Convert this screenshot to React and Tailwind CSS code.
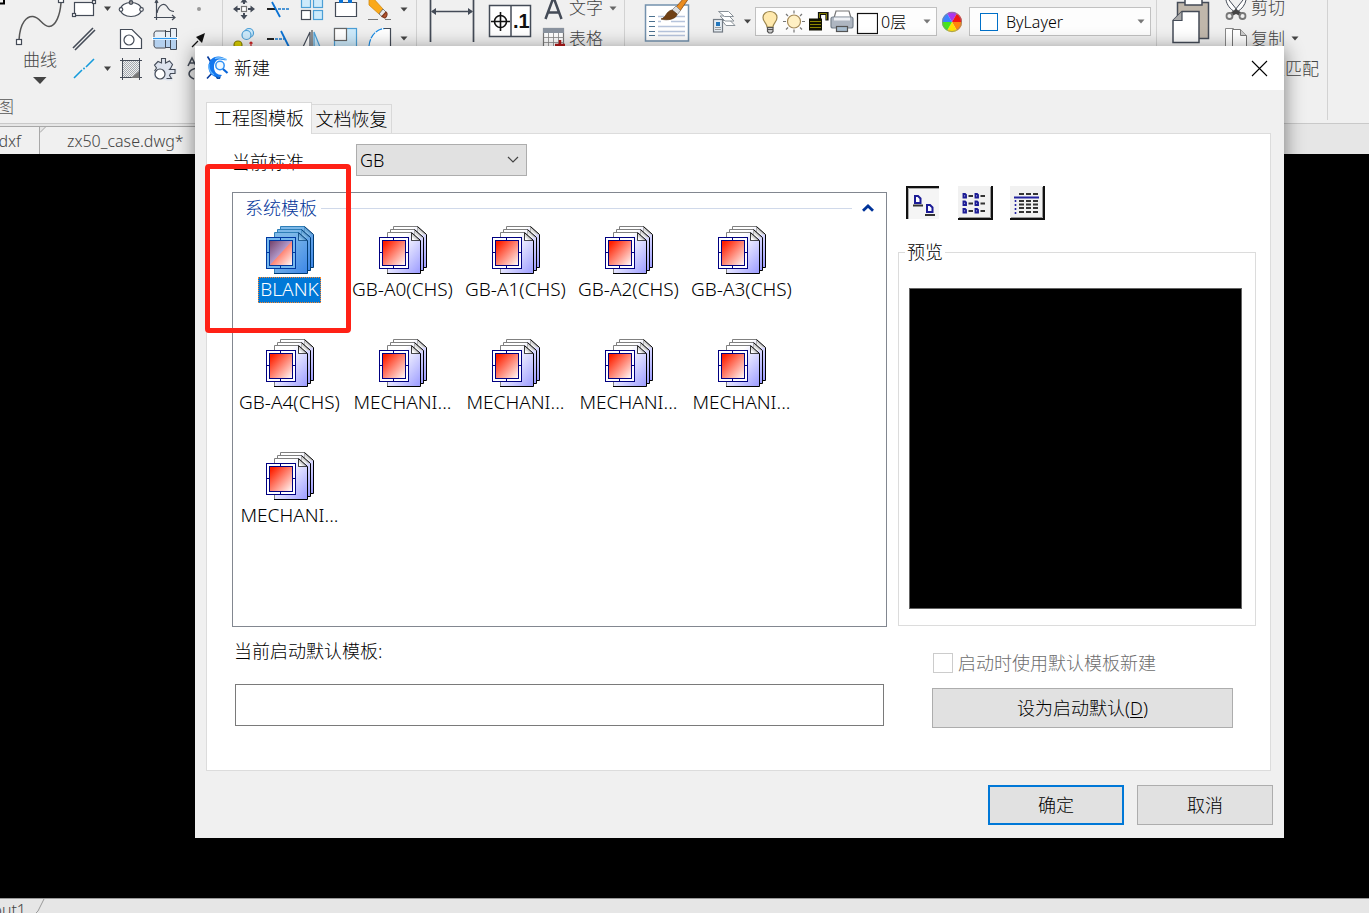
import React from "react";

const UI = "font-light font-['Noto_Sans','Noto_Sans_CJK_SC',sans-serif]";

/* Drawing tile whose coordinates are window coordinates. */
function Tile({ x, y, w, h, children }) {
  return (
    <svg width={w} height={h} viewBox={`${x} ${y} ${w} ${h}`} className="block shrink-0" fill="none" stroke="#444b57" strokeWidth="1.2">
      {children}
    </svg>
  );
}

function Caret({ className = "text-[#444]" }) {
  return (
    <svg width="8" height="5" viewBox="0 0 8 5" className={`block shrink-0 ${className}`}>
      <path d="M0.5 0.5h7L4 4.5z" fill="currentColor" />
    </svg>
  );
}

function DrawGroup() {
  return (
    <div className="flex h-full w-[223px] shrink-0 flex-col border-r border-[#d2d2d2]">
      <div className="flex h-[84px]">
        <div className="flex w-[70px] flex-col">
          <Tile x={0} y={0} w={70} h={48}>
            <path d="M0 3.500H4V0" stroke="#000" strokeWidth="2" />
            <path d="M19 40C20 22 27 16 33 16.500C40 17 42 26 49 26.500C56 26 60 15 61 3" strokeWidth="1.500" stroke="#555" />
            <rect x="16.500" y="39.500" width="5" height="5" fill="#fff" />
            <rect x="58.500" y="-2.500" width="5" height="5" fill="#fff" />
          </Tile>
          <div className="flex h-[36px] flex-col items-center pl-[10px]">
            <span className="h-[28px] text-[17px] leading-[24px] text-[#444]">曲线</span>
            <svg width="14" height="8" viewBox="0 0 14 8" className="block"><path d="M0 1h13.500L7 8z" fill="#444" /></svg>
          </div>
        </div>
        <div className="flex flex-col">
          <div className="flex">
            <Tile x={70} y={0} w={44} h={24}>
              <rect x="74.500" y="2.500" width="19" height="13" fill="#fff" />
              <rect x="72.500" y="13.500" width="3" height="3" fill="#fff" />
              <rect x="92.500" y="0.500" width="3" height="3" fill="#fff" />
              <path d="M104 6.500h7l-3.500 4.500z" fill="#444" stroke="none" />
            </Tile>
            <Tile x={114} y={0} w={34} h={24}>
              <ellipse cx="131" cy="9.500" rx="10.500" ry="7" fill="#fff" />
              <circle cx="131" cy="2.500" r="1.800" fill="#999" />
              <circle cx="121" cy="9.500" r="1.800" fill="#fff" />
              <circle cx="141.500" cy="9.500" r="1.800" fill="#fff" />
            </Tile>
            <Tile x={148} y={0} w={34} h={24}>
              <path d="M156.500 0v20M154 17.500h20M172 15l3 2.500l-3 2.500M155 3l1.500-3l1.500 3" />
              <path d="M157 13C159 3 165 3 167 6.500C169 10 170 11 174 11.500" />
            </Tile>
            <Tile x={182} y={0} w={34} h={24}><circle cx="199" cy="9" r="2" fill="#999" stroke="none" /></Tile>
          </div>
          <div className="flex">
            <Tile x={70} y={24} w={44} h={30}><path d="M73 48L93 28M75 50L95 30" strokeWidth="1.600" /></Tile>
            <Tile x={114} y={24} w={34} h={30}>
              <path d="M120.500 29.500H132L141.500 39V48.500H120.500z" fill="#fff" />
              <circle cx="129" cy="40" r="5" />
            </Tile>
            <Tile x={148} y={24} w={34} h={30}>
              <path d="M155.500 31h10v17h-10l-1.500-2v-13zM165.500 31.500h5v16h-5zM170.500 28.500h6v21h-6z" fill="#e9eff6" stroke="none" />
              <path d="M154 39h22.500v10.500h-6v-2h-15l-1.500-2z" fill="#b4d0ee" stroke="none" />
              <path d="M165.500 31h-10l-1.500 2v13l1.500 2h10M165.500 30v18M165.500 31.500h5M165.500 47.500h5M170.500 28.500h6v21h-6z" strokeWidth="1" />
              <path d="M152 38.500h26" stroke="#fff" strokeWidth="3" /><path d="M153 38.500h24" stroke="#2f98ee" strokeWidth="1.300" />
            </Tile>
            <Tile x={182} y={24} w={34} h={30}><path d="M192 47l6-6" stroke="#111" /><path d="M205 33l-9 4l6 6z" fill="#111" stroke="none" /></Tile>
          </div>
          <div className="flex">
            <Tile x={70} y={54} w={44} h={30}>
              <path d="M74 78l8-8M86 67l8-8" stroke="#149bdc" strokeWidth="1.600" />
              <circle cx="84" cy="68.500" r="1" fill="#149bdc" stroke="none" />
              <path d="M104 66.500h7l-3.500 4.500z" fill="#444" stroke="none" />
            </Tile>
            <Tile x={114} y={54} w={34} h={30}>
              <defs><pattern id="hatch" width="2" height="2" patternUnits="userSpaceOnUse"><path d="M0 0h1v1H0zM1 1h1v1H1z" fill="#a3a9b0" stroke="none" /></pattern></defs>
              <path d="M123 61h16v11l-7 5h-9z" fill="url(#hatch)" stroke="none" />
              <path d="M122.500 58v22M139.500 58v22M120 60.500h22M120 77.500h22" strokeWidth="1" />
              <path d="M139 71l-8 7h8z" fill="#777" stroke="none" />
            </Tile>
            <Tile x={148} y={54} w={34} h={30}>
              <path d="M154 78v-6l3-4l-3-3l3.500-4l4 1.500v-4h4v4l4-2.500l4 4l-2 4.500h5v5h-4v7h-5z" fill="#dde3ee" stroke="none" />
              <path d="M154.500 71l2-3l-2-3l3.500-3.500l3.500 1.500v-4.500h4v4.500l4-2l3 3.500l-2 4l-1 1h5.500v4h-4.500l-1 2l2 3h-5" strokeWidth="1.100" />
              <circle cx="160" cy="74" r="5" fill="#fff" />
            </Tile>
            <Tile x={182} y={54} w={34} h={30}><path d="M188 66l4-8l4 8M190 63h5M197 68c-10 2-10 8-3 11" strokeWidth="1.600" /></Tile>
          </div>
        </div>
      </div>
      <div className="flex h-[39px] pt-[12px]"><span className="-ml-[3px] text-[17px] leading-[22px] text-[#555]">图</span></div>
    </div>
  );
}

function ModifyGroup() {
  return (
    <div className="flex h-full w-[194px] shrink-0 flex-col border-r border-[#d2d2d2]">
      <div className="flex">
        <Tile x={223} y={0} w={39} h={24}>
          <rect x="241.500" y="6.500" width="5" height="5" fill="#fff" stroke="#777" />
          <path d="M235 9h5M248 9h5M244 0v4M244 13v4" strokeWidth="2" />
          <path d="M233 9l4.500-3.500v7zM255 9l-4.500-3.500v7zM244 19.500l-3.500-4.500h7zM244 -2l-3.500 4.500h7z" fill="#444b57" stroke="none" />
        </Tile>
        <Tile x={262} y={0} w={33} h={24}><path d="M267 9h9" strokeWidth="2" stroke="#222" /><path d="M278 9h12" strokeWidth="1.500" strokeDasharray="3 1" stroke="#1477cc" /><path d="M272 2l8 15" stroke="#0a72d4" strokeWidth="1.800" /></Tile>
        <Tile x={295} y={0} w={33} h={24}>
          <g fill="#cdeafb" stroke="#4c9fd6"><rect x="301.500" y="-2" width="9" height="9.500" /><rect x="313.500" y="-2" width="9" height="9.500" /><rect x="313.500" y="10.500" width="9" height="9" /></g>
          <rect x="301.500" y="10.500" width="9" height="9" fill="#fff" />
        </Tile>
        <Tile x={328} y={0} w={35} h={24}><path d="M335.500 2.500h21v14h-21z" fill="#fff" /><path d="M339 0h4v3h-4zM348 0h4v3h-4z" fill="#0a72d4" stroke="none" /></Tile>
        <Tile x={363} y={0} w={32} h={24}>
          <path d="M369 0l4-2l10 11l-4 5l-10-9z" fill="#fba919" stroke="#d18a11" strokeWidth="0.800" />
          <path d="M379 14l4-5l3 3l-4 4.500z" fill="#e8e8e8" stroke="#666" strokeWidth="0.800" />
          <path d="M382 16.500l4-4.500c2 1 1 5-1 6z" fill="#b5542f" stroke="#803a20" />
          <path d="M368 19.500h10M385 19.500h6" stroke="#777" />
        </Tile>
        <div className="flex h-[18px] items-center pl-[5px]"><Caret /></div>
      </div>
      <div className="flex">
        <Tile x={223} y={24} w={39} h={30}><circle cx="249" cy="33" r="4.500" fill="#cdeafb" stroke="#4c9fd6" /><circle cx="246.500" cy="35" r="4.500" fill="#cdeafb" stroke="#4c9fd6" /><circle cx="238" cy="45" r="4" fill="#dcd000" stroke="#888000" /><path d="M251 42v6M249.500 43.500l1.500-1.500l1.500 1.500" stroke="#c22" /></Tile>
        <Tile x={262} y={24} w={33} h={30}><path d="M267 39h7" strokeWidth="2" stroke="#222" /><path d="M275 39h9" strokeWidth="1.500" strokeDasharray="3 1" stroke="#1477cc" /><path d="M281 31l8 16" stroke="#0a72d4" strokeWidth="1.800" /></Tile>
        <Tile x={295} y={24} w={33} h={30}><path d="M303 47l7-15v15" fill="#fff" /><path d="M320 47l-6-15v15" fill="#cdeafb" stroke="#4c9fd6" /><path d="M312 30v20" strokeWidth="1.600" stroke="#777" /></Tile>
        <Tile x={328} y={24} w={35} h={30}><rect x="334.500" y="28.500" width="22" height="22" fill="#cdeafb" stroke="#4c9fd6" /><rect x="334.500" y="28.500" width="12" height="12" fill="#fff" stroke="#666" /></Tile>
        <Tile x={363} y={24} w={32} h={30}><path d="M369 50C369 36 376 28.500 385 28.500H390.500V50" fill="#fff" stroke="none" /><path d="M369 46C370 36 376 29 385 28.500" stroke="#198be5" strokeDasharray="7 1" /><path d="M384 28.500h6.500V50" /></Tile>
        <div className="flex h-[28px] items-center pl-[5px]"><Caret /></div>
      </div>
    </div>
  );
}

function AnnotateGroup() {
  return (
    <div className="flex h-full w-[208px] shrink-0 border-r border-[#d2d2d2]">
      <Tile x={417} y={0} w={63} h={50}>
        <path d="M430.500 0v42M473.500 0v42" strokeWidth="1.700" />
        <path d="M432 11.500h40" strokeWidth="1.300" />
        <path d="M431 11.500l5-3.500v7zM473 11.500l-5-3.500v7z" fill="#444b57" stroke="none" />
      </Tile>
      <Tile x={480} y={0} w={56} h={50}>
        <rect x="489.500" y="5.500" width="41" height="31" fill="#fff" strokeWidth="1.500" />
        <path d="M511 5v32" strokeWidth="1.500" />
        <circle cx="500.500" cy="21.500" r="6" stroke="#111" strokeWidth="1.600" /><path d="M491 21.500h19M500.500 12v19" stroke="#111" strokeWidth="1.600" />
        <text x="513" y="28" fontSize="20" fontWeight="700" fill="#111" stroke="none" fontFamily="Liberation Sans">.1</text>
      </Tile>
      <div className="flex flex-col text-[17px] text-[#444]">
        <div className="flex h-[24px]">
          <Tile x={536} y={0} w={33} h={24}><path d="M545.500 19L552.500 0H554.500L561.500 19M548 12.500h11" strokeWidth="2.500" /></Tile>
          <span className="-mt-[4px] leading-[24px]">文字</span>
          <div className="flex h-[17px] items-center pl-[6px]"><Caret className="text-[#666]" /></div>
        </div>
        <div className="flex h-[30px]">
          <Tile x={536} y={24} w={33} h={30}>
            <rect x="543.500" y="28.500" width="20" height="22" fill="#fff" stroke="#777" /><rect x="543" y="28" width="21" height="5" fill="#8a939f" stroke="none" />
            <path d="M544 37.500h20M544 42.500h20M548.500 33v17M553.500 33v17M558.500 33v17" strokeWidth="0.800" stroke="#888" />
            <path d="M560 40v10M555 45h10" stroke="#b01818" strokeWidth="2.500" />
          </Tile>
          <span className="mt-[3px] leading-[24px]">表格</span>
        </div>
      </div>
    </div>
  );
}

function Combo({ children }) {
  return (
    <div className="mt-[7px] flex h-[29px] w-[182px] shrink-0 items-center border border-[#c1c1c1] bg-[#fdfdfd] text-[16px] text-black">
      {children}
      <div className="ml-auto pr-[5px]"><Caret className="text-[#777]" /></div>
    </div>
  );
}

function LayerGroup() {
  return (
    <div className="flex h-full w-[532px] shrink-0 border-r border-[#d2d2d2]">
      <Tile x={625} y={0} w={80} h={50}>
        <rect x="645.500" y="5" width="43" height="36" fill="#fff" stroke="#7391ad" strokeWidth="1.500" />
        <path d="M649 16.500h6M649 21.500h6M649 26.500h6M649 31.500h6M649 35.500h6" stroke="#4b7190" />
        <path d="M658 16.500h6M674 16.500h11M658 21.500h3M671 21.500h14M658 26.500h27M658 31.500h27M658 35.500h27" stroke="#b6c4dc" strokeWidth="1.500" />
        <path d="M676 7l8-9h5l-9 13z" fill="#e98c20" stroke="#854811" strokeWidth="0.800" />
        <path d="M672 10l4-4l4.500 4.500l-3 4z" fill="#ddd" stroke="#777" strokeWidth="0.700" />
        <path d="M661 19c5-1 5-8 11-9l5 4c0 5-10 7-16 5z" fill="#704014" stroke="#54300f" strokeWidth="0.700" />
      </Tile>
      <Tile x={705} y={0} w={50} h={50}>
        <g fill="#fff" stroke="#8a9299" strokeWidth="1"><path d="M722 20.500h8l5 5h-9z" /><path d="M720 16h9l5 5h-9z" /><path d="M718.500 11.500h10l5 5h-9z" /></g>
        <rect x="713.500" y="19.500" width="9" height="12.500" fill="#e6edf3" stroke="#737b84" />
        <rect x="716" y="22" width="4" height="4" fill="#2377bd" stroke="none" /><path d="M715 27.500h6M715 29.500h6" strokeWidth="0.800" stroke="#888" />
        <path d="M744 19.500h7l-3.500 4z" fill="#444" stroke="none" />
      </Tile>
      <Combo>
        <Tile x={756} y={8} w={122} h={27}>
          <path d="M767 27c0-4-4-5-4-9.500c0-8 14-8 14 0c0 4.500-4 5.500-4 9.500z" fill="#ffe9ad" stroke="#9c8750" />
          <path d="M767.500 27.500h5.500v4l-1.500 1.500h-2.500l-1.500-1.500zM767.500 29.500h5.500" fill="#ccc" stroke="#555" />
          <circle cx="794" cy="21.500" r="6.500" fill="#fff0c4" stroke="#a58a58" />
          <path d="M794 10.500v3M794 29.500v3M783 21.500h3M802 21.500h3M786 14l2 2M800 27.500l2 2M786 29.500l2-2M800 16l2-2" stroke="#777" />
          <path d="M819.500 20v-6.500h7.500v7" stroke="#111" strokeWidth="3.200" /><path d="M819.500 18v-4.500h7v6" stroke="#8c8700" strokeWidth="0.900" />
          <rect x="809" y="18.500" width="13" height="12" fill="#111100" stroke="none" /><path d="M810 21.500h11M810 24.500h11M810 27.500h11" stroke="#8c8700" strokeWidth="1" />
          <path d="M834 18l2-7h13l2 7" fill="#fff" stroke="#777" />
          <rect x="831" y="17" width="22" height="11" rx="2" fill="#aeb6c1" stroke="#77828e" /><path d="M834 19h16" stroke="#eef1f5" strokeWidth="3" /><rect x="836.500" y="26.500" width="11" height="5" fill="#a9bed0" stroke="#555" />
          <rect x="857.500" y="13.500" width="20" height="20" fill="#fff" stroke="#111" />
        </Tile>
        <span className="pl-[3px] leading-[24px]">0层</span>
      </Combo>
      <Tile x={937} y={0} w={32} h={45}>
        <g stroke="none">
          <path d="M952 22L947 13.300A10 10 0 0 1 957 13.300z" fill="#ad35ef" /><path d="M952 22L957 13.300A10 10 0 0 1 962 22z" fill="#f31616" />
          <path d="M952 22H962A10 10 0 0 1 957 30.700z" fill="#ff850b" /><path d="M952 22L957 30.700A10 10 0 0 1 947 30.700z" fill="#ffe100" />
          <path d="M952 22L947 30.700A10 10 0 0 1 942 22z" fill="#48e31d" /><path d="M952 22H942A10 10 0 0 1 947 13.300z" fill="#3a83ff" />
        </g>
        <circle cx="952" cy="22" r="9.500" stroke="#888" strokeWidth="0.800" />
      </Tile>
      <Combo>
        <span className="ml-[10px] mr-[8px] block h-[18px] w-[18px] border border-[#0070c8] bg-white" />
        <span className="leading-[24px]">ByLayer</span>
      </Combo>
    </div>
  );
}

function ClipGroup() {
  return (
    <div className="flex h-[120px] w-[171px] shrink-0 border-r border-[#d2d2d2] text-[17px] text-[#444]">
      <Tile x={1157} y={0} w={66} h={50}>
        <rect x="1177.500" y="2.500" width="31" height="36" fill="#c0b7ab" strokeWidth="1.500" />
        <path d="M1185 -1h17v6h-17z" fill="#fff" strokeWidth="1.500" />
        <path d="M1182 11.500h17v31h-26v-22z" fill="#fff" strokeWidth="1.500" /><path d="M1182 11.500v9h-9" fill="#aaa" />
      </Tile>
      <div className="flex flex-col">
        <div className="flex h-[24px]">
          <Tile x={1223} y={0} w={28} h={24}>
            <path d="M1226 0c1 5 4 9 9 12l2-2l-8-10M1246 0c-1 5-4 9-9 12l-2-2l8-10" fill="#fff" strokeWidth="1" />
            <path d="M1230 13l6-4l6 4l-2 3l-4-2l-4 2z" fill="#444" stroke="none" />
            <circle cx="1229.500" cy="16" r="3" strokeWidth="1.800" stroke="#777" /><circle cx="1242.500" cy="16" r="3" strokeWidth="1.800" stroke="#777" />
          </Tile>
          <span className="-mt-[4px] leading-[24px]">剪切</span>
        </div>
        <div className="flex h-[30px]">
          <Tile x={1223} y={24} w={28} h={30}>
            <path d="M1225.500 28.500h8l4 4V50h-12z" fill="#fff" stroke="#888" strokeWidth="1" /><path d="M1232.500 29.500h8l6 6V50h-14z" fill="#fff" stroke="#777" strokeWidth="1" /><path d="M1240.500 29.500v6h6" fill="#ccc" stroke="#777" strokeWidth="1" />
          </Tile>
          <span className="mt-[3px] leading-[24px]">复制</span>
          <div className="flex h-[29px] items-center pl-[6px]"><Caret /></div>
        </div>
        <div className="flex h-[30px] pl-[28px]"><span className="mt-[3px] leading-[24px]">特性匹配</span></div>
      </div>
    </div>
  );
}

function DocTabs() {
  return (
    <div className="flex h-[31px] shrink-0 items-end border-t border-[#c9c9c9] bg-[#e6e6e6] text-[16px] text-[#444]">
      <div className="flex h-[28px] w-[40px] items-center justify-end border-r border-t border-[#a8a8a8] bg-[#f0f0f0] pr-[18px]">dxf</div>
      <div className="flex h-[28px] w-[170px] items-center border-t border-[#a8a8a8] bg-[#f0f0f0]">
        <svg width="6" height="28" viewBox="0 0 6 28" className="block"><path d="M0 0H6L0 6z" fill="#e6e6e6" /><path d="M0 5.500L5.500 0" stroke="#a8a8a8" fill="none" /></svg>
        <span className="pl-[21px]">zx50_case.dwg*</span>
      </div>
    </div>
  );
}

function TemplateIcon({ selected }) {
  const id = selected ? "sel" : "std";
  const edge = selected ? "#003b73" : "#000";
  const back = selected ? "#2f7fb8" : "#808080";
  const paper = `url(#paper-${id})`;
  const navy = selected ? "#0038a0" : "#000080";
  return (
    <svg width="50" height="48" viewBox="0 0 50 48" className="block" fill="none">
      <defs>
        <linearGradient id={`paper-${id}`} x1="0" y1="0" x2="1" y2="1">
          <stop offset="0.3" stopColor={selected ? "#7db8e8" : "#ffffff"} /><stop offset="1" stopColor={selected ? "#3c86e8" : "#9a9aff"} />
        </linearGradient>
        <linearGradient id={`red-${id}`} x1="0" y1="0" x2="1" y2="1">
          <stop offset="0.1" stopColor="#ff2000" /><stop offset="1" stopColor="#ffffff" />
        </linearGradient>
        <linearGradient id={`fold-${id}`} x1="0" y1="1" x2="1" y2="0">
          <stop offset="0.2" stopColor={selected ? "#8cc4ee" : "#ffffff"} /><stop offset="0.6" stopColor={selected ? "#3a7db8" : "#9a9a9a"} />
        </linearGradient>
        <linearGradient id="shade" x1="0" y1="0" x2="1" y2="1"><stop offset="0" stopColor="#74436b" /><stop offset="0.55" stopColor="#b9a3d4" /></linearGradient>
      </defs>
      {[[6, -6], [3, -3], [0, 0]].map(([dx, dy]) => (
        <g key={dx} transform={`translate(${dx} ${dy})`}>
          <path d="M9.500 6.500H33.500L42.500 14.500V47.500H9.500z" fill={paper} />
          <path d="M9.500 47V6.500H33.500V14.500" stroke={back} />
          <path d="M33.500 6.500V14.500H42.500z" fill={`url(#fold-${id})`} />
          <path d="M33.500 6.500L42.500 14.500V47.500H9" stroke={edge} />
          {dx === 0 && <path d="M33.500 7V14.500H42" stroke={edge} strokeWidth="0.700" />}
        </g>
      ))}
      <rect x="1.500" y="11.500" width="29" height="31" fill={selected ? "#75b8ee" : "#fff"} stroke={navy} />
      <path d="M15.500 11v4M15.500 39v4M1 26.500h4M27 26.500h4" stroke={navy} />
      <rect x="4.500" y="14.500" width="23" height="25" fill={`url(#red-${id})`} stroke={navy} />
      {selected && <path d="M5 15H27L5 39z" fill="url(#shade)" />}
    </svg>
  );
}

const templates = ["BLANK", "GB-A0(CHS)", "GB-A1(CHS)", "GB-A2(CHS)", "GB-A3(CHS)", "GB-A4(CHS)", "MECHANI...", "MECHANI...", "MECHANI...", "MECHANI...", "MECHANI..."];

function TemplateList() {
  return (
    <div className="h-[435px] w-[655px] border border-[#828790] bg-white">
      <div className="flex h-[33px] items-start pl-[12px] pr-[12px]">
        <span className="pt-[3px] text-[18px] leading-[24px] text-[#003399]">系统模板</span>
        <div className="ml-[4px] mt-[15px] h-px flex-1 bg-[#d0d9ea]" />
        <svg width="12" height="8" viewBox="0 0 12 8" className="ml-[10px] mt-[11px] block"><path d="M1 6.800L6 2L11 6.800" fill="none" stroke="#003399" strokeWidth="2.800" /></svg>
      </div>
      <div className="grid w-[565px] grid-cols-5 auto-rows-[113px]">
        {templates.map((name, i) => (
          <div key={i} className="flex flex-col items-center">
            <TemplateIcon selected={i === 0} />
            <span className={i === 0
              ? "mt-[3px] h-[26px] w-[63px] whitespace-nowrap bg-[#0078d7] text-center text-[19px] leading-[24px] text-white outline-dotted outline-1 -outline-offset-1 outline-[#ff8728]"
              : "mt-[3px] h-[26px] whitespace-nowrap text-[19px] leading-[24px] text-black"}>{name}</span>
          </div>
        ))}
      </div>
    </div>
  );
}

function ViewButtons() {
  const page = (x, y, k) => <path key={k} d={`M${x} ${y}h3l2.500 2.500v4.500h-5.500z`} fill="#fff" stroke="#1c1c96" strokeWidth="2" />;
  return (
    <div className="flex gap-[17px] pl-[8px]">
      <svg width="35" height="34" viewBox="0 0 35 34" className="block">
        <rect width="33" height="33" fill="#f5f5f5" /><path d="M1 33V1H33" stroke="#111" strokeWidth="2" fill="none" /><path d="M2.500 33V2.500H33" stroke="#aaa" fill="none" />
        {page(9, 10, "a")}{page(21, 19, "b")}<path d="M7 19.500h10M19 29h10" stroke="#333" strokeWidth="2" />
      </svg>
      <svg width="35" height="34" viewBox="0 0 35 34" className="block">
        <rect width="34" height="33" fill="#f1f1f1" /><path d="M32.500 1V31.500H1" stroke="#999" fill="none" /><path d="M34 0V33H0" stroke="#111" strokeWidth="2" fill="none" />
        {[8, 15.500, 23].map((y) => <g key={y} fill="none"><path d={`M5.500 ${y}h1.500l1 1v2.500h-2.500zM17.500 ${y}h1.500l1 1v2.500h-2.500z`} stroke="#1c1c96" strokeWidth="1.900" /><path d={`M10.500 ${y + 2}h4.500M22.500 ${y + 2}h4.500`} stroke="#333" strokeWidth="2" /></g>)}
      </svg>
      <svg width="35" height="34" viewBox="0 0 35 34" className="block">
        <rect width="34" height="33" fill="#f1f1f1" /><path d="M32.500 1V31.500H1" stroke="#999" fill="none" /><path d="M34 0V33H0" stroke="#111" strokeWidth="2" fill="none" />
        <path d="M9 8h5M16 8h5M23 8h5M9 15h5M16 15h5M23 15h5M9 18.500h5M16 18.500h5M23 18.500h5M9 22h5M16 22h5M23 22h5M9 26h5M16 26h5M23 26h5" stroke="#333" strokeWidth="2.200" />
        <path d="M4 11.500h25" stroke="#2323a0" strokeWidth="2" /><path d="M5.500 14v14" stroke="#2323a0" strokeWidth="1.600" strokeDasharray="2 2" />
      </svg>
    </div>
  );
}

function Dialog() {
  return (
    <div className="absolute left-[195px] top-[46px] flex h-[792px] w-[1089px] flex-col bg-[#f0f0f0] text-[18px] text-black shadow-[0_4px_18px_1px_rgba(0,0,0,0.45)]">
      <div className="flex h-[44px] shrink-0 items-center bg-white pl-[11px] pr-[16px]">
        <svg width="24" height="26" viewBox="0 0 24 26" className="block" fill="none">
          <path d="M1.500 1.500L5 7M1 23.500L7 17" stroke="#063a9c" strokeWidth="1.600" />
          <path d="M5 4.500C1 9 2 17 6 20C10 23 14 23 16 20C11 20 8 17 8 12C8 8 10 5 13 4.500C17 4 19 6 21 5C17 1 9 0 5 4.500z" fill="#1377ee" />
          <path d="M9 3.500C13 1.500 17 4 21 4.500" stroke="#8fd0ff" strokeWidth="1.200" />
          <path d="M3 9C2.500 14 5 18 8 20" stroke="#5db4ff" strokeWidth="1.200" />
          <circle cx="14" cy="10.500" r="4.200" stroke="#2f90f5" strokeWidth="1.500" fill="#eef8ff" />
          <path d="M17 14L21.500 18" stroke="#0865d8" strokeWidth="2.200" />
          <path d="M9 21C11 22.500 14 22.500 15 21L14 24H11z" fill="#064fae" />
        </svg>
        <span className="-mt-[1px] pl-[4px] leading-[24px]">新建</span>
        <svg width="17" height="17" viewBox="0 0 17 17" className="ml-auto block"><path d="M1 1L16 16M16 1L1 16" stroke="#000" strokeWidth="1.100" /></svg>
      </div>

      <div className="flex h-[43px] shrink-0 items-end pl-[11px]">
        <div className="z-10 mb-[-1px] flex h-[32px] w-[106px] items-start justify-center border border-b-0 border-[#d9d9d9] bg-white pt-[3px] leading-[24px]">工程图模板</div>
        <div className="flex h-[29px] w-[80px] items-start justify-center border border-b-0 border-l-0 border-[#d9d9d9] pt-[2px] leading-[24px]">文档恢复</div>
      </div>

      <div className="mx-[11px] flex h-[638px] w-[1065px] shrink-0 border border-[#dcdcdc] bg-white">
        <div className="flex w-[691px] shrink-0 flex-col pl-[25px] pt-[10px]">
          <div className="flex h-[48px]">
            <span className="w-[124px] pt-[6px] leading-[24px]">当前标准</span>
            <div className="flex h-[32px] w-[171px] items-center border border-[#adadad] bg-[#e1e1e1] pl-[3px] pr-[7px]">
              <span className="leading-[24px]">GB</span>
              <svg width="12" height="8" viewBox="0 0 12 8" className="ml-auto block"><path d="M1 1L6 6L11 1" fill="none" stroke="#444" strokeWidth="1.200" /></svg>
            </div>
          </div>
          <TemplateList />
          <span className="pl-[2px] pt-[12px] leading-[24px]">当前启动默认模板:</span>
          <div className="ml-[3px] mt-[21px] h-[42px] w-[649px] border border-[#7a7a7a] bg-white" />
        </div>

        <div className="flex w-[358px] shrink-0 flex-col pt-[52px]">
          <ViewButtons />
          <div className="mt-[32px] flex h-[374px] w-[358px] flex-col border border-[#dcdcdc]">
            <span className="-mt-[13px] ml-[6px] w-[40px] bg-white pl-[2px] leading-[25px]">预览</span>
            <div className="ml-[10px] mt-[23px] h-[321px] w-[333px] border border-[#646464] bg-black" />
          </div>
          <div className="mt-[26px] flex h-[22px] items-center pl-[35px] text-[#6d6d6d]">
            <span className="block h-[20px] w-[20px] border border-[#cccccc] bg-white" />
            <span className="pl-[5px] leading-[22px]">启动时使用默认模板新建</span>
          </div>
          <button className="ml-[34px] mt-[14px] h-[40px] w-[301px] border border-[#adadad] bg-[#e1e1e1] leading-[24px]">设为启动默认(<span className="underline underline-offset-2">D</span>)</button>
        </div>
      </div>

      <div className="flex justify-end gap-[13px] pr-[11px] pt-[14px]">
        <button className="h-[40px] w-[136px] border-2 border-[#0078d7] bg-[#e1e1e1]">确定</button>
        <button className="h-[40px] w-[136px] border border-[#adadad] bg-[#e1e1e1]">取消</button>
      </div>
    </div>
  );
}

export default function App() {
  return (
    <div className={`relative flex h-[913px] w-[1369px] flex-col overflow-hidden bg-[#f0f0f0] ${UI}`}>
      <div className="flex h-[123px] shrink-0 overflow-hidden bg-[#f0f0f0]">
        <DrawGroup />
        <ModifyGroup />
        <AnnotateGroup />
        <LayerGroup />
        <ClipGroup />
      </div>
      <DocTabs />
      <div className="h-[744px] shrink-0 bg-black" />
      <div className="flex h-[15px] shrink-0 items-start overflow-hidden border-t border-[#999] bg-[#e6e6e6] text-[16px] text-[#444]">
        <div className="flex w-[34px] justify-end pr-[8px]"><span className="leading-[23px]">Layout1</span></div>
        <svg width="12" height="15" viewBox="0 0 12 15" className="block"><path d="M1 15L4 12L10 0" fill="none" stroke="#999" /></svg>
      </div>
      <Dialog />
      <div className="absolute left-[205px] top-[164px] h-[169px] w-[146px] rounded-[4px] border-[5px] border-[#ff2116]" />
    </div>
  );
}
